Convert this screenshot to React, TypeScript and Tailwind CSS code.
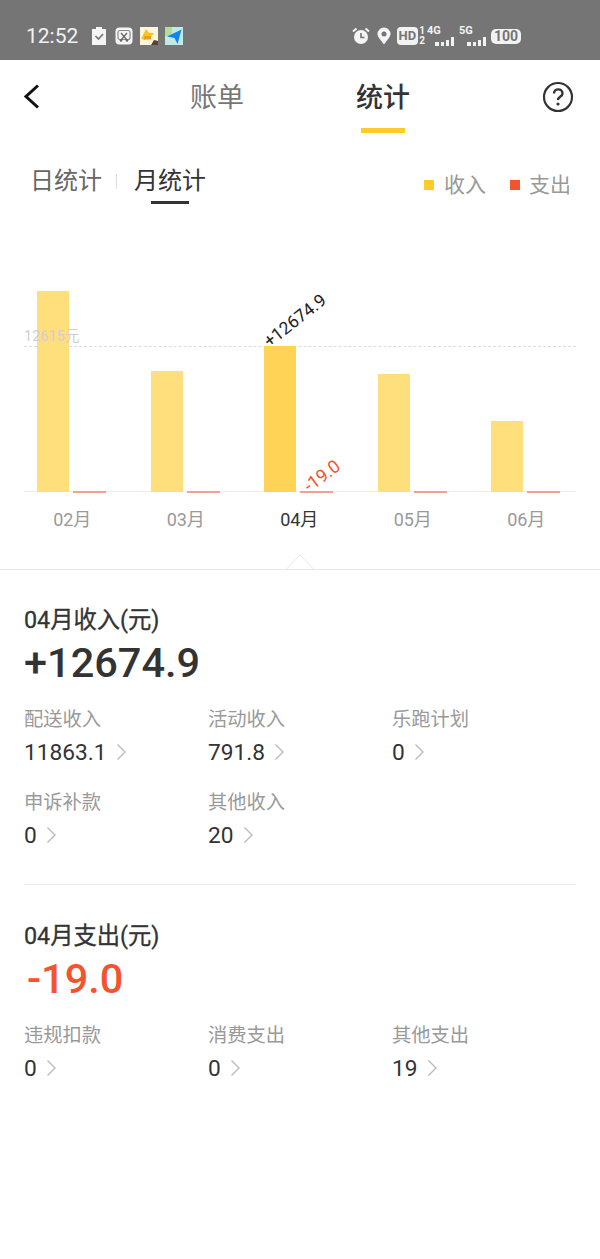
const sans = "font-['Roboto','Noto_Sans_CJK_SC',sans-serif]";

function StatusBar() {
  return (
    <div className="flex h-[60px] items-center bg-[#757575] pt-[12px] text-[#f2f2f2]">
      <span className="ml-[26px] w-[52px] text-[21px] leading-[24px]">12:52</span>
      <div className="ml-[14px] flex items-center gap-[7px]">
        <svg width="14" height="18" viewBox="0 0 14 18">
          <path d="M0 2h4V0h6v2h4v16H0z" fill="#f5f5f5" />
          <path d="M3.500 9l3 3 4.500-5" stroke="#757575" strokeWidth="1.700" fill="none" />
        </svg>
        <svg width="18" height="18" viewBox="0 0 18 18" className="ml-[2px]">
          <rect x="0.500" y="0.500" width="17" height="17" rx="4" fill="#f5f5f5" />
          <rect x="3" y="3.500" width="12" height="9" rx="2" fill="none" stroke="#888" strokeWidth="1.200" />
          <path d="M6 6l6 7M12 6l-6 7" stroke="#666" strokeWidth="1.300" />
          <circle cx="6" cy="13.500" r="1.300" fill="#666" />
          <circle cx="12" cy="13.500" r="1.300" fill="#666" />
        </svg>
        <svg width="18" height="18" viewBox="0 0 18 18">
          <rect width="18" height="18" fill="#fdf6dc" />
          <path d="M1 12l3-6 2-4 3 4 5 0-3 4H6l-1 3z" fill="#f8c51d" />
          <rect x="4" y="9" width="7" height="3.500" fill="#f29a1d" />
          <path d="M11 18l3-5 4 1v4z" fill="#5d4037" />
        </svg>
        <svg width="18" height="18" viewBox="0 0 18 18">
          <rect width="18" height="18" fill="#bfeae6" />
          <rect width="7" height="9" fill="#b5dc9a" />
          <path d="M2 9.500L16.500 2.500 12.500 17 9.500 11z" fill="#1485ee" />
        </svg>
      </div>
      <div className="ml-auto mr-[79px] flex items-center">
        <svg width="18" height="18" viewBox="0 0 18 18">
          <circle cx="9" cy="10" r="7" fill="#f5f5f5" />
          <path d="M9 6V10.500H12.500" stroke="#757575" strokeWidth="1.600" fill="none" />
          <path d="M1 4.500L4.500 1.500M17 4.500L13.500 1.500" stroke="#f5f5f5" strokeWidth="2" />
        </svg>
        <svg width="14" height="18" viewBox="0 0 14 18" className="ml-[7px]">
          <path d="M7 17.500C3.500 12.500 0.500 10 0.500 7a6.500 6.500 0 0113 0c0 3-3 5.500-6.500 10.500z" fill="#f5f5f5" />
          <circle cx="7" cy="7" r="2.500" fill="#757575" />
        </svg>
        <div className="ml-[6px] flex items-center">
          <span className="rounded-[4px] bg-[#f2f2f2] px-[2px] text-[13px] font-bold leading-[18px] text-[#757575]">HD</span>
          <span className="ml-[1px] flex flex-col text-[10px] font-bold leading-[10px]"><span>1</span><span>2</span></span>
        </div>
        <Signal label="4G" className="ml-[2px]" />
        <Signal label="5G" className="ml-[5px]" />
        <span className="ml-[5px] rounded-[5px] bg-[#f2f2f2] px-[3px] text-[14px] font-bold leading-[15px] text-[#757575]">100</span>
      </div>
    </div>
  );
}

function Signal({ label, className }: { label: string; className: string }) {
  return (
    <div className={`relative flex h-[20px] w-[27px] items-end justify-end gap-[2px] ${className}`}>
      <span className="absolute left-0 top-[-1px] text-[11px] font-bold leading-[11px]">{label}</span>
      <i className="h-[4px] w-[4px] bg-[#f2f2f2]" />
      <i className="h-[4px] w-[3px] bg-[#f2f2f2]" />
      <i className="h-[6px] w-[3px] bg-[#f2f2f2]" />
      <i className="h-[9px] w-[3px] bg-[#f2f2f2]" />
    </div>
  );
}

function Nav() {
  return (
    <div className="relative flex h-[73px] justify-center">
      <svg width="18" height="28" viewBox="0 0 18 28" className="absolute left-[23px] top-[23px]">
        <path d="M15 2.500L3 13.500 15 24.500" stroke="#111" strokeWidth="3" fill="none" />
      </svg>
      <div className="flex gap-[112px] pt-[18px]">
        <span className="text-[27px] leading-[40px] text-[#777]">账单</span>
        <div className="flex flex-col items-center">
          <span className="text-[27px] font-medium leading-[40px] text-[#333]">统计</span>
          <i className="mt-[10px] h-[5px] w-[44px] bg-[#ffcb29]" />
        </div>
      </div>
      <svg width="32" height="32" viewBox="0 0 32 32" className="absolute left-[542px] top-[21px]">
        <circle cx="16" cy="16" r="14" stroke="#333" strokeWidth="2.200" fill="none" />
        <path d="M12 12.500c0-5.500 8.500-5.500 8.500 0 0 3-4.500 3-4.500 6.500" stroke="#333" strokeWidth="2.400" fill="none" />
        <circle cx="16" cy="23" r="1.600" fill="#333" />
      </svg>
    </div>
  );
}

function SubTabs() {
  return (
    <div className="flex h-[76px] items-start pl-[30px] pt-[30px]">
      <span className="text-[24px] leading-[36px] text-[#666]">日统计</span>
      <i className="mx-[14px] mt-[11px] h-[15px] w-[1px] bg-[#ddd]" />
      <div className="ml-[3px] flex flex-col items-center">
        <span className="text-[24px] leading-[36px] text-[#333]">月统计</span>
        <i className="mt-[2px] h-[3px] w-[38px] bg-[#333]" />
      </div>
      <div className="ml-auto mr-[29px] flex items-center pt-[4px] text-[21px] leading-[36px] text-[#999]">
        <i className="h-[10px] w-[10px] bg-[#ffcb29]" />
        <span className="ml-[10px]">收入</span>
        <i className="ml-[24px] h-[10px] w-[10px] bg-[#f4532f]" />
        <span className="ml-[9px]">支出</span>
      </div>
    </div>
  );
}

const months = [
  { m: "02月", h: 201 },
  { m: "03月", h: 121 },
  { m: "04月", h: 146, active: true },
  { m: "05月", h: 118 },
  { m: "06月", h: 71 },
];

function Chart() {
  return (
    <div className="relative h-[361px]">
      <div className="absolute left-[24px] right-[24px] top-[137px] border-t border-dashed border-[#ddd]" />
      <div className="absolute left-[24px] right-[24px] top-[282px] h-[1px] bg-[#eeeeee]" />
      <div className="relative ml-[15px] flex w-[568px] pt-[82px]">
        {months.map((x) => (
          <div key={x.m} className="flex w-[113.500px] flex-col items-center">
            <div className="flex h-[201px] items-end gap-[4px]">
              <div style={{ height: x.h }} className={x.active ? "w-[32px] bg-[#ffd355]" : "w-[32px] bg-[#ffde7c]"} />
              <div className="mb-[-1px] h-[2px] w-[33px] bg-[#f0a095]" />
            </div>
            <span className={x.active ? "ml-[1px] mt-[16px] text-[18px] leading-[24px] text-[#333]" : "ml-[1px] mt-[16px] text-[18px] leading-[24px] text-[#999]"}>{x.m}</span>
          </div>
        ))}
      </div>
      <div className="absolute left-[24px] top-[119px] text-[14.500px] leading-[18px] text-[#cfcfcf]">12615元</div>
      <div className="absolute left-[272px] top-[122px] origin-bottom-left rotate-[-38deg] whitespace-nowrap text-[17.500px] leading-[20px] text-[#222]">+12674.9</div>
      <div className="absolute left-[312px] top-[267px] origin-bottom-left rotate-[-37deg] whitespace-nowrap text-[18px] leading-[20px] text-[#f4532f]">-19.0</div>
      <svg width="30" height="16" viewBox="0 0 30 16" className="absolute left-[285px] top-[345px]">
        <path d="M1 15.500L15 1l14 14.500" fill="#fff" stroke="#e8e8e8" />
      </svg>
      <div className="absolute bottom-0 left-0 right-0 h-[1px] bg-[#e8e8e8]" />
    </div>
  );
}

function Cell({ label, value }: { label: string; value: string }) {
  return (
    <div className="h-[83px]">
      <div className="text-[19.300px] leading-[26px] text-[#999]">{label}</div>
      <div className="mt-[7px] flex items-center text-[22.700px] leading-[26px] text-[#333]">
        {value}
        <svg width="11" height="18" viewBox="0 0 11 18" className="ml-[9px] mt-[-3px]">
          <path d="M1.500 1.500L9 9l-7.500 7.500" stroke="#bbb" strokeWidth="1.400" fill="none" />
        </svg>
      </div>
    </div>
  );
}

function Section({ title, total, color, items }: { title: string; total: string; color: string; items: string[][] }) {
  return (
    <div>
      <div className="text-[23.300px] leading-[30px] text-[#333] [-webkit-text-stroke:0.3px_#333]">{title}</div>
      <div className={`mt-[3px] text-[41.500px] font-medium leading-[50px] ${color}`}>{total}</div>
      <div className="mt-[19px] grid grid-cols-[184px_184px_184px]">
        {items.map(([l, v]) => (
          <Cell key={l} label={l} value={v} />
        ))}
      </div>
    </div>
  );
}

export default function App() {
  return (
    <div className={`h-[1259px] w-[600px] overflow-hidden bg-white ${sans}`}>
      <StatusBar />
      <Nav />
      <SubTabs />
      <Chart />
      <div className="px-[24px] pt-[35px]">
        <Section
          title="04月收入(元)"
          total="+12674.9"
          color="text-[#333]"
          items={[["配送收入", "11863.1"], ["活动收入", "791.8"], ["乐跑计划", "0"], ["申诉补款", "0"], ["其他收入", "20"]]}
        />
        <div className="mt-[11px] h-[1px] bg-[#e8e8e8]" />
        <div className="pt-[36px]">
          <Section
            title="04月支出(元)"
            total="-19.0"
            color="pl-[3px] text-[#f4532f]"
            items={[["违规扣款", "0"], ["消费支出", "0"], ["其他支出", "19"]]}
          />
        </div>
      </div>
    </div>
  );
}
